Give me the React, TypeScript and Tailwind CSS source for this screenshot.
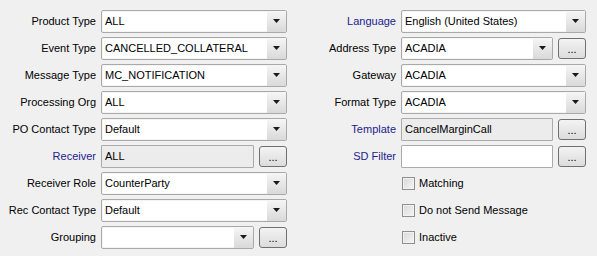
import React from "react";

const font = { fontFamily: '"Liberation Sans", Arial, sans-serif' };

function Arrow() {
  return (
    <svg width="8" height="5" viewBox="0 0 8 5" className="block">
      <path d="M0 0 H7 L3.5 4 Z" fill="#1a1a1a" />
    </svg>
  );
}

function Combo({ value, w }: { value: string; w: string }) {
  return (
    <div className={`${w} h-[23px] flex border border-[#a9a9a9] rounded-[2px] bg-white shadow-[inset_0_0_0_1px_#f4f4f4]`}>
      <div className="flex-1 flex items-center pl-[3px] text-[11px] text-black truncate">{value}</div>
      <div className="w-[19px] flex items-center justify-center bg-gradient-to-b from-[#f6f6f6] to-[#d9d9d9]">
        <Arrow />
      </div>
    </div>
  );
}

function TextBox({ value, w, disabled }: { value: string; w: string; disabled?: boolean }) {
  return (
    <div
      className={`${w} h-[23px] flex items-center pl-[3px] border border-[#ababab] rounded-[1px] text-[11px] text-black ${
        disabled ? "bg-[#ececec]" : "bg-white"
      }`}
    >
      {value}
    </div>
  );
}

function Dots() {
  return (
    <div className="w-[28px] h-[21px] ml-[5px] border border-[#707070] rounded-[3px] bg-gradient-to-b from-[#f3f3f3] to-[#dcdcdc] flex items-center justify-center text-[11px] leading-none text-black pt-[2px]">
      ...
    </div>
  );
}

function Label({ text, blue }: { text: string; blue?: boolean }) {
  return (
    <div className={`w-[96px] pr-0 text-right text-[11px] whitespace-nowrap ${blue ? "text-[#22228c]" : "text-black"}`}>
      {text}
    </div>
  );
}

function Row({ children }: { children: React.ReactNode }) {
  return <div className="h-[23px] flex items-center gap-[5px]">{children}</div>;
}

function Check({ text }: { text: string }) {
  return (
    <div className="h-[23px] flex items-center pl-[102px]">
      <div className="w-[13px] h-[13px] border border-[#8f8f8f] bg-gradient-to-br from-[#d8d8d8] to-[#f6f6f6] shadow-[inset_0_0_0_1px_#f2f2f2]" />
      <span className="ml-[4px] text-[11px] text-black">{text}</span>
    </div>
  );
}

export default function App() {
  return (
    <div className="w-[597px] h-[256px] bg-[#f0f0f0] overflow-hidden" style={font}>
      <div className="flex pt-[10px]">
        <div className="w-[300px] flex flex-col gap-[4px]">
          <Row><Label text="Product Type" /><Combo value="ALL" w="w-[186px]" /></Row>
          <Row><Label text="Event Type" /><Combo value="CANCELLED_COLLATERAL" w="w-[186px]" /></Row>
          <Row><Label text="Message Type" /><Combo value="MC_NOTIFICATION" w="w-[186px]" /></Row>
          <Row><Label text="Processing Org" /><Combo value="ALL" w="w-[186px]" /></Row>
          <Row><Label text="PO Contact Type" /><Combo value="Default" w="w-[186px]" /></Row>
          <Row><Label text="Receiver" blue /><div className="flex items-center"><TextBox value="ALL" w="w-[153px]" disabled /><Dots /></div></Row>
          <Row><Label text="Receiver Role" /><Combo value="CounterParty" w="w-[186px]" /></Row>
          <Row><Label text="Rec Contact Type" /><Combo value="Default" w="w-[186px]" /></Row>
          <Row><Label text="Grouping" /><div className="flex items-center"><Combo value="" w="w-[153px]" /><Dots /></div></Row>
        </div>
        <div className="w-[297px] flex flex-col gap-[4px] pl-0">
          <Row><Label text="Language" blue /><Combo value="English (United States)" w="w-[185px]" /></Row>
          <Row><Label text="Address Type" /><div className="flex items-center"><Combo value="ACADIA" w="w-[152px]" /><Dots /></div></Row>
          <Row><Label text="Gateway" /><Combo value="ACADIA" w="w-[185px]" /></Row>
          <Row><Label text="Format Type" /><Combo value="ACADIA" w="w-[185px]" /></Row>
          <Row><Label text="Template" blue /><div className="flex items-center"><TextBox value="CancelMarginCall" w="w-[152px]" disabled /><Dots /></div></Row>
          <Row><Label text="SD Filter" blue /><div className="flex items-center"><TextBox value="" w="w-[152px]" /><Dots /></div></Row>
          <Check text="Matching" />
          <Check text="Do not Send Message" />
          <Check text="Inactive" />
        </div>
      </div>
    </div>
  );
}
